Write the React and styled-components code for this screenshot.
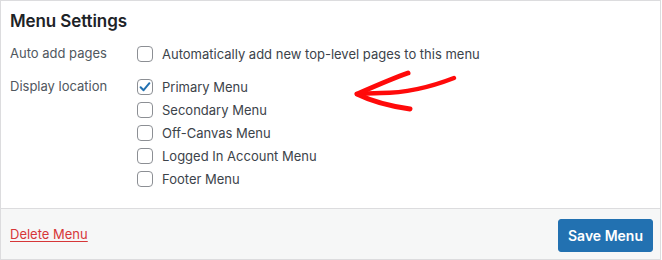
import React from 'react'
import styled, { createGlobalStyle } from 'styled-components'

const GlobalStyle = createGlobalStyle`
  html, body {
    margin: 0;
    padding: 0;
    background: #ffffff;
  }
  body {
    font-family: Inter, "Noto Sans", "Liberation Sans", sans-serif;
    -webkit-font-smoothing: antialiased;
  }
`;

// Outer frame with the grey border
const Frame = styled.div`
  width: 661px;
  height: 260px;
  box-sizing: border-box;
  border: 1px solid #dcdcde;
  border-bottom: none;
  display: flex;
  flex-direction: column;
  position: relative;
`;

const Body = styled.div`
  flex: 1;
  padding: 9px 9px 0;
  background: #ffffff;
`;

const Heading = styled.h3`
  margin: 0 0 10px;
  font-size: 17px;
  line-height: 22px;
  font-weight: 600;
  color: #1d2327;
  letter-spacing: -0.1px;
`;

const Row = styled.div`
  display: grid;
  grid-template-columns: 127px 1fr;
  margin-bottom: ${({ gap }) => gap || 0}px;
`;

const Label = styled.div`
  font-size: 13px;
  line-height: 23px;
  color: #50575e;
`;

const Options = styled.div`
  display: flex;
  flex-direction: column;
`;

const Option = styled.label`
  display: flex;
  align-items: center;
  gap: 9px;
  height: 23px;
  font-size: 13px;
  color: #3c434a;
`;

const Box = styled.span`
  width: 16px;
  height: 16px;
  box-sizing: border-box;
  border: 1px solid #8c8f94;
  border-radius: 4px;
  background: #ffffff;
  display: flex;
  align-items: center;
  justify-content: center;
  flex-shrink: 0;
`;

const Footer = styled.div`
  height: 52px;
  flex-shrink: 0;
  box-sizing: border-box;
  border-top: 1px solid #dcdcde;
  border-bottom: 1px solid #dcdcde;
  background: #f6f7f7;
  display: flex;
  align-items: center;
  justify-content: space-between;
  padding: 0 7px 0 9px;
`;

const DeleteLink = styled.a`
  font-size: 13px;
  color: #d63638;
  text-decoration: underline;
  text-underline-offset: 2px;
  cursor: pointer;
`;

const SaveButton = styled.button`
  height: 33px;
  width: 95px;
  padding: 0;
  margin-top: 2px;
  border: 1px solid #2271b1;
  border-radius: 3px;
  background: #2271b1;
  color: #ffffff;
  font-family: inherit;
  font-size: 14px;
  font-weight: 600;
  cursor: pointer;
`;

// Hand-drawn annotation arrow lying over the panel
const Arrow = styled.svg`
  position: absolute;
  left: 340px;
  top: 60px;
  pointer-events: none;
`;

const Check = () => (
  <svg width="14" height="14" viewBox="0 0 14 14">
    <path d="M2.6 7.2 L5.6 10.2 L11.4 3.2" fill="none" stroke="#2271b1" strokeWidth="2" strokeLinecap="round" strokeLinejoin="round" />
  </svg>
);

const Checkbox = ({ label, checked }) => (
  <Option>
    <Box>{checked && <Check />}</Box>
    {label}
  </Option>
);

const locations = [
  { label: 'Primary Menu', checked: true },
  { label: 'Secondary Menu' },
  { label: 'Off-Canvas Menu' },
  { label: 'Logged In Account Menu' },
  { label: 'Footer Menu' },
];

export default function App() {
  return (
    <>
      <GlobalStyle />
      <Frame>
        <Body>
          <Heading>Menu Settings</Heading>
          <Row gap={10}>
            <Label>Auto add pages</Label>
            <Options>
              <Checkbox label="Automatically add new top-level pages to this menu" />
            </Options>
          </Row>
          <Row>
            <Label>Display location</Label>
            <Options>
              {locations.map((loc) => (
                <Checkbox key={loc.label} label={loc.label} checked={loc.checked} />
              ))}
            </Options>
          </Row>
        </Body>
        <Footer>
          <DeleteLink>Delete Menu</DeleteLink>
          <SaveButton>Save Menu</SaveButton>
        </Footer>
        <Arrow width="130" height="60" viewBox="0 0 130 60">
          <path d="M113 17 C95 24 70 32 40 32 C30 32 22 33 16 33" fill="none" stroke="#ff0a0a" strokeWidth="4.5" strokeLinecap="round" />
          <path d="M67 12 C50 18 32 26 16 33 C30 40 48 45 69 48" fill="none" stroke="#ff0a0a" strokeWidth="5" strokeLinecap="round" strokeLinejoin="round" />
        </Arrow>
      </Frame>
    </>
  );
}
